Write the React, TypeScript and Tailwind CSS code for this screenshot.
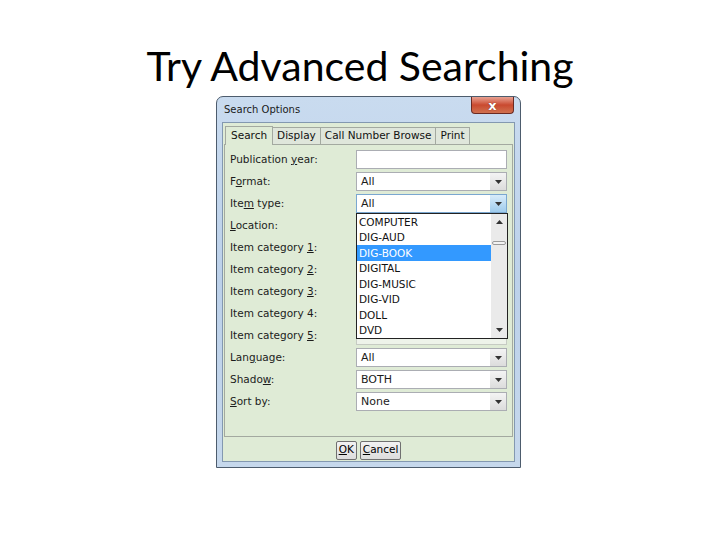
import React from "react"

const rows: { label: React.ReactNode; kind: "input" | "select" | "none"; value?: string }[] = [
  { label: <>Publication <u>y</u>ear:</>, kind: "input" },
  { label: <>F<u>o</u>rmat:</>, kind: "select", value: "All" },
  { label: <>Ite<u>m</u> type:</>, kind: "select", value: "All" },
  { label: <><u>L</u>ocation:</>, kind: "none" },
  { label: <>Item category <u>1</u>:</>, kind: "none" },
  { label: <>Item category <u>2</u>:</>, kind: "none" },
  { label: <>Item category <u>3</u>:</>, kind: "none" },
  { label: <>Item category 4:</>, kind: "none" },
  { label: <>Item category <u>5</u>:</>, kind: "none" },
  { label: <>Lan<u>g</u>uage:</>, kind: "select", value: "All" },
  { label: <>Shado<u>w</u>:</>, kind: "select", value: "BOTH" },
  { label: <><u>S</u>ort by:</>, kind: "select", value: "None" },
]

const itemTypes = ["COMPUTER", "DIG-AUD", "DIG-BOOK", "DIGITAL", "DIG-MUSIC", "DIG-VID", "DOLL", "DVD"]

function Arrow({ up }: { up?: boolean }) {
  return (
    <svg width="7" height="4" viewBox="0 0 7 4">
      <path d={up ? "M0 4 L3.5 0 L7 4 Z" : "M0 0 L7 0 L3.5 4 Z"} fill="#333" />
    </svg>
  )
}

function Select({ value, focused }: { value: string; focused?: boolean }) {
  return (
    <div
      className={`flex h-[19px] w-[151px] items-center border ${
        focused ? "border-[#7aa7d0]" : "border-[#abadb3]"
      } bg-white`}
    >
      <span className="flex-1 pl-[4px] text-[11px] leading-none">{value}</span>
      <div
        className={`flex h-full w-[16px] items-center justify-center ${
          focused ? "bg-gradient-to-b from-[#d8ecfa] to-[#9ecbec]" : "bg-gradient-to-b from-[#f4f4f4] to-[#dcdcdc]"
        }`}
      >
        <Arrow />
      </div>
    </div>
  )
}

export default function App() {
  return (
    <div className="flex h-[540px] w-[720px] flex-col items-center bg-white" style={{ fontFamily: "Lato, sans-serif" }}>
      <h1 className="mt-[36px] text-[41px] leading-[60px] text-black" style={{ fontFamily: "Lato, sans-serif" }}>
        Try Advanced Searching
      </h1>

      <div className="ml-[17px] flex h-[372px] w-[305px] flex-col rounded-t-[7px] border border-[#4d5c6d] bg-gradient-to-b from-[#c9dbef] via-[#bcd1ea] to-[#c6d8ec] px-[5px] pb-[5px]">
        {/* caption bar */}
        <div className="relative flex h-[25px] items-center pl-[2px]" style={{ fontFamily: "'DejaVu Sans', sans-serif" }}>
          <span className="text-[10px] text-[#1a1a1a]">Search Options</span>
          <div className="absolute right-[1px] top-0 flex h-[17px] w-[43px] items-center justify-center rounded-b-[4px] border border-t-0 border-[#6b2a22] bg-gradient-to-b from-[#e8a192] via-[#c9492f] to-[#d0714f]">
            <span className="text-[13px] font-bold leading-none text-white" style={{ textShadow: "0 0 1px #5a1a10" }}>
              x
            </span>
          </div>
        </div>

        {/* client area */}
        <div
          className="relative flex flex-1 flex-col border border-[#8398b0] bg-[#dfebd6] px-[1px] pt-[3px]"
          style={{ fontFamily: "'DejaVu Sans', sans-serif" }}
        >
          <div className="flex h-[18px] items-end pl-[1px] text-[10.5px] text-[#111]">
            <div className="z-10 -mb-px flex h-[19px] items-center border border-b-0 border-[#a3a9a0] bg-[#dfebd6] px-[5px]">
              Search
            </div>
            <div className="flex h-[17px] items-center border border-l-0 border-b-0 border-[#a3a9a0] bg-[#dfe6db] px-[4px]">
              Display
            </div>
            <div className="flex h-[17px] items-center border border-l-0 border-b-0 border-[#a3a9a0] bg-[#dfe6db] px-[4px]">
              Call Number Browse
            </div>
            <div className="flex h-[17px] items-center border border-l-0 border-b-0 border-[#a3a9a0] bg-[#dfe6db] px-[4px]">
              Print
            </div>
          </div>

          <div className="relative flex h-[293px] flex-col gap-[3px] border border-[#a3a9a0] pl-[5px] pt-[5px] text-[10.5px] text-[#1c1c1c]">
            {rows.map((r, i) => (
              <div key={i} className="flex h-[19px] items-center">
                <div className="w-[126px]">{r.label}</div>
                {r.kind === "input" && <div className="h-[19px] w-[151px] border border-[#abadb3] bg-white" />}
                {r.kind === "select" && <Select value={r.value!} focused={i === 2} />}
                {r.kind === "none" && <div className="h-[19px] w-[151px] border border-[#c6cbc3] bg-[#eef3ea]" />}
              </div>
            ))}

            {/* open item type list */}
            <div className="absolute left-[131px] top-[68px] flex h-[126px] w-[152px] border border-[#222] bg-white">
              <div className="flex flex-1 flex-col">
                {itemTypes.map((t) => (
                  <div
                    key={t}
                    className={`flex h-[15.5px] items-center pl-[2px] text-[10.5px] leading-none ${
                      t === "DIG-BOOK" ? "bg-[#3399ff] text-white" : "text-[#111]"
                    }`}
                  >
                    {t}
                  </div>
                ))}
              </div>
              <div className="flex w-[16px] flex-col items-center justify-between bg-[#eaeaea] py-[6px]">
                <Arrow up />
                <div className="-mt-[66px] h-[4px] w-[14px] rounded-[2px] border border-[#9a9a9a] bg-[#f2f2f2]" />
                <Arrow />
              </div>
            </div>
          </div>

          <div className="flex flex-1 items-center justify-center gap-[3px] pt-[2px] text-[10.5px]">
            <div className="flex h-[19px] items-center rounded-[2px] border border-[#707070] bg-gradient-to-b from-[#f2f2f2] to-[#dddddd] px-[2px]">
              <u>O</u>K
            </div>
            <div className="flex h-[19px] items-center rounded-[2px] border border-[#707070] bg-gradient-to-b from-[#f2f2f2] to-[#dddddd] px-[2px]">
              <u>C</u>ancel
            </div>
          </div>
        </div>
      </div>
    </div>
  )
}
